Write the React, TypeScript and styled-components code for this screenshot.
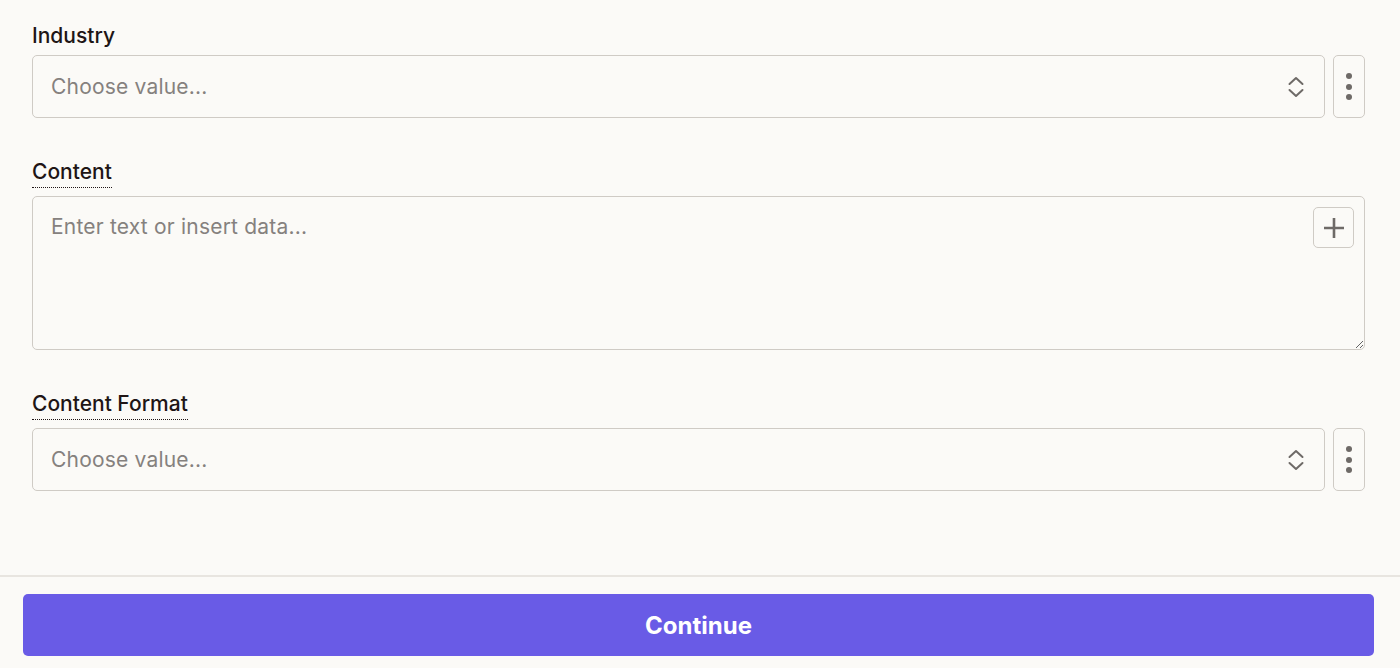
import React from "react";
import styled, { createGlobalStyle } from "styled-components";

const Global = createGlobalStyle`
  html, body {
    margin: 0;
    padding: 0;
    background: #fbfaf7;
  }
  body {
    font-family: Inter, "Noto Sans", "Liberation Sans", sans-serif;
    color: #201515;
  }
  * { box-sizing: border-box; }
`;

const Page = styled.div`
  height: 668px;
  display: flex;
  flex-direction: column;
  overflow: hidden;
`;

const Main = styled.main`
  flex: 1;
  display: flex;
  flex-direction: column;
  gap: 38px;
  padding: 21px 35px 0 32px;
`;

const Group = styled.div<{ $gap: number }>`
  display: flex;
  flex-direction: column;
  align-items: stretch;
  gap: ${(p) => p.$gap}px;
`;

const Label = styled.label<{ $hint?: boolean }>`
  align-self: flex-start;
  font-size: 21px;
  line-height: 30px;
  font-weight: 500;
  color: #201515;
  letter-spacing: 0;
  padding-top: ${(p) => (p.$hint ? 1 : 0)}px;
  border-bottom: 1px dotted ${(p) => (p.$hint ? "#201515" : "transparent")};
`;

const SelectRow = styled.div`
  display: flex;
  gap: 8px;
  height: 63px;
`;

const SelectBox = styled.div`
  flex: 1;
  display: flex;
  align-items: center;
  justify-content: space-between;
  border: 1px solid #cfcbc5;
  border-radius: 5px;
  background: #fbfaf7;
  padding: 0 19px 0 18px;
`;

const Placeholder = styled.span`
  font-size: 21px;
  line-height: 24px;
  letter-spacing: 0.2px;
  color: #85817e;
`;

const MenuButton = styled.button`
  width: 32px;
  border: 1px solid #cfcbc5;
  border-radius: 5px;
  background: #fbfaf7;
  display: flex;
  flex-direction: column;
  align-items: center;
  justify-content: center;
  gap: 4.5px;
  padding: 0;
`;

const Dot = styled.span`
  width: 6px;
  height: 6px;
  border-radius: 50%;
  background: #6e6a67;
`;

const TextWrap = styled.div`
  position: relative;
  height: 154px;
  display: flex;
`;

const TextArea = styled.textarea`
  flex: 1;
  resize: vertical;
  border: 1px solid #cfcbc5;
  border-radius: 5px;
  background: #fbfaf7;
  padding: 15px 60px 15px 18px;
  font-family: Inter, "Noto Sans", "Liberation Sans", sans-serif;
  font-size: 21px;
  line-height: 30px;
  letter-spacing: 0.2px;
  color: #201515;
  outline: none;
  &::placeholder {
    color: #85817e;
  }
`;

const PlusButton = styled.button`
  position: absolute;
  top: 11px;
  right: 11px;
  width: 41px;
  height: 41px;
  border: 1px solid #cfcbc5;
  border-radius: 5px;
  background: #fbfaf7;
  display: flex;
  align-items: center;
  justify-content: center;
  padding: 0;
`;

const Footer = styled.footer`
  border-top: 2px solid #e8e5e0;
  padding: 17px 26px 12px 23px;
`;

const ContinueButton = styled.button`
  width: 100%;
  height: 62px;
  border: none;
  border-radius: 5px;
  background: #695be6;
  color: #ffffff;
  font-family: Inter, "Noto Sans", "Liberation Sans", sans-serif;
  font-size: 24px;
  font-weight: 700;
  letter-spacing: 0;
`;

const Chevrons = () => (
  <svg width="18" height="22" viewBox="0 0 18 22" fill="none">
    <path d="M2.5 8 L9 2 L15.5 8" stroke="#6e6a67" strokeWidth="2" strokeLinecap="round" strokeLinejoin="round" />
    <path d="M2.5 14 L9 20 L15.5 14" stroke="#6e6a67" strokeWidth="2" strokeLinecap="round" strokeLinejoin="round" />
  </svg>
);

const PlusIcon = () => (
  <svg width="22" height="22" viewBox="0 0 22 22" fill="none">
    <path d="M11 1 V21 M1 11 H21" stroke="#6e6a67" strokeWidth="2.6" />
  </svg>
);

const SelectField = ({ label, hint }: { label: string; hint?: boolean }) => (
  <Group $gap={hint ? 8 : 3}>
    <Label $hint={hint}>{label}</Label>
    <SelectRow>
      <SelectBox>
        <Placeholder>Choose value...</Placeholder>
        <Chevrons />
      </SelectBox>
      <MenuButton aria-label="More">
        <Dot />
        <Dot />
        <Dot />
      </MenuButton>
    </SelectRow>
  </Group>
);

export default function App() {
  return (
    <Page>
      <Global />
      <Main>
        <SelectField label="Industry" />
        <Group $gap={8}>
          <Label $hint>Content</Label>
          <TextWrap>
            <TextArea placeholder="Enter text or insert data..." />
            <PlusButton aria-label="Insert data">
              <PlusIcon />
            </PlusButton>
          </TextWrap>
        </Group>
        <SelectField label="Content Format" hint />
      </Main>
      <Footer>
        <ContinueButton>Continue</ContinueButton>
      </Footer>
    </Page>
  );
}
